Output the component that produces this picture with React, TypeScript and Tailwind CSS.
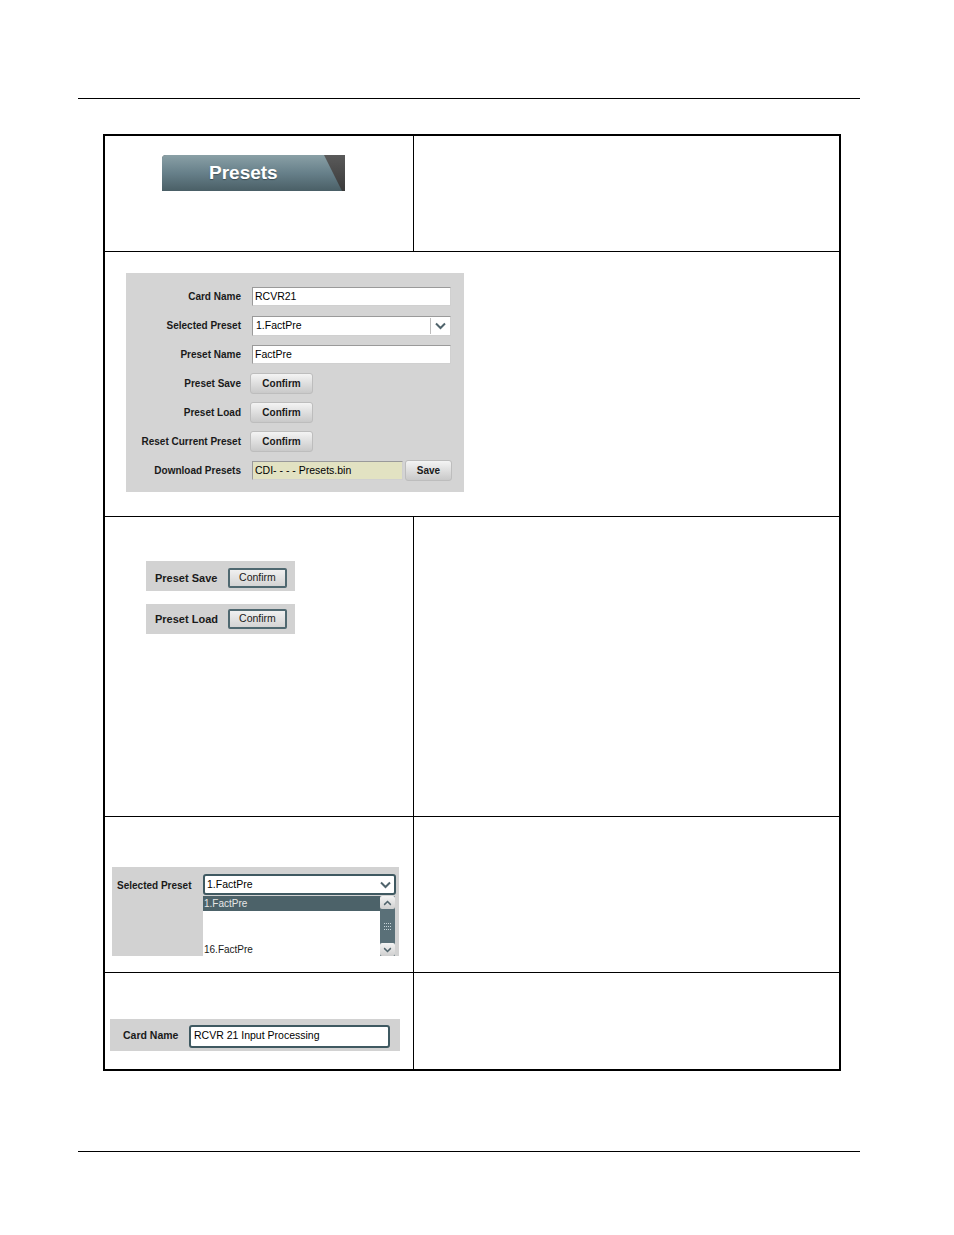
import React from "react";

const font = "font-['Liberation_Sans',Arial,sans-serif]";

function Chevron({ className = "" }: { className?: string }) {
  return (
    <svg width="11" height="8" viewBox="0 0 11 8" className={className}>
      <polyline points="1,1.5 5.5,6 10,1.5" fill="none" stroke="#50646c" strokeWidth="2" />
    </svg>
  );
}

function ConfirmButton({ label = "Confirm", w = "w-[63px]" }: { label?: string; w?: string }) {
  return (
    <div
      className={`${w} flex h-[21px] items-center justify-center rounded-[3px] border border-[#bdbdbd] bg-gradient-to-b from-[#f4f4f4] to-[#c9c9c9] text-[10px] font-bold text-[#1a1a1a]`}
    >
      {label}
    </div>
  );
}

function TextBox({ value, w = "w-[199px]", bg = "bg-white" }: { value: string; w?: string; bg?: string }) {
  return (
    <div
      className={`${w} ${bg} flex h-[19px] items-center border border-[#9a9a9a] border-b-[#d0d0d0] border-r-[#d0d0d0] pl-[2px] text-[10.5px] text-black`}
    >
      {value}
    </div>
  );
}

function FormRow({ label, children }: { label: string; children: React.ReactNode }) {
  return (
    <div className="flex h-[29px] items-center">
      <div className="w-[115px] text-right text-[10px] font-bold text-[#1a1a1a]">{label}</div>
      <div className="ml-[11px]">{children}</div>
    </div>
  );
}

function PresetsTab() {
  return (
    <div className="relative h-[36px] w-[183px] overflow-hidden rounded-tl-[4px] bg-gradient-to-b from-[#5a5a5a] to-[#3a3a3a]">
      <div className="absolute inset-0 bg-gradient-to-b from-[#8aa0a6] via-[#67808a] to-[#4a5f66] [clip-path:polygon(0_0,162px_0,180px_36px,0_36px)]" />
      <div className="absolute inset-0 flex items-center pl-[47px] text-[19px] font-bold text-white [text-shadow:0_1px_1px_rgba(0,0,0,0.35)]">
        Presets
      </div>
    </div>
  );
}

export default function App() {
  return (
    <div className={`${font} relative h-[1235px] w-[954px] bg-white`}>
      <div className="pt-[98px]">
        <div className="ml-[78px] h-px w-[782px] bg-black" />
      </div>

      <div className="ml-[103px] mt-[35px] w-[738px] border-2 border-black">
        {/* row 1 */}
        <div className="flex h-[116px] border-b border-black">
          <div className="w-[309px] border-r border-black pl-[57px] pt-[19px]">
            <PresetsTab />
          </div>
          <div className="flex-1" />
        </div>

        {/* row 2 */}
        <div className="h-[265px] border-b border-black pl-[21px] pt-[21px]">
          <div className="w-[338px] bg-[#d4d4d4] pb-[7px] pt-[9px]">
            <FormRow label="Card Name">
              <TextBox value="RCVR21" />
            </FormRow>
            <FormRow label="Selected Preset">
              <div className="flex h-[20px] w-[199px] items-center border border-[#9a9a9a] border-b-[#d0d0d0] border-r-[#d0d0d0] bg-white text-[10.5px]">
                <div className="flex-1 pl-[3px]">1.FactPre</div>
                <div className="flex h-[16px] w-[20px] items-center justify-center border-l border-[#bdbdbd]">
                  <Chevron />
                </div>
              </div>
            </FormRow>
            <FormRow label="Preset Name">
              <TextBox value="FactPre" />
            </FormRow>
            <FormRow label="Preset Save">
              <div className="-ml-[2px]">
                <ConfirmButton />
              </div>
            </FormRow>
            <FormRow label="Preset Load">
              <div className="-ml-[2px]">
                <ConfirmButton />
              </div>
            </FormRow>
            <FormRow label="Reset Current Preset">
              <div className="-ml-[2px]">
                <ConfirmButton />
              </div>
            </FormRow>
            <FormRow label="Download Presets">
              <div className="flex items-center gap-[2px]">
                <TextBox value="CDI- - - -  Presets.bin" w="w-[151px]" bg="bg-[#e2e2c2]" />
                <ConfirmButton label="Save" w="w-[47px]" />
              </div>
            </FormRow>
          </div>
        </div>

        {/* row 3 */}
        <div className="flex h-[300px] border-b border-black">
          <div className="w-[309px] border-r border-black pl-[41px] pt-[44px]">
            {["Preset Save", "Preset Load"].map((l, i) => (
              <div
                key={l}
                className={`flex h-[30px] w-[149px] items-center bg-[#d2d2d2] pl-[9px] ${i ? "mt-[13px]" : "pt-[4px]"}`}
              >
                <div className="w-[73px] text-[11px] font-bold text-[#1a1a1a]">{l}</div>
                <div className="flex h-[20px] w-[59px] items-center justify-center rounded-[2px] border-2 border-[#4f6870] bg-gradient-to-b from-[#f0f0f0] to-[#d4d4d4] text-[10.5px] text-[#1a1a1a]">
                  Confirm
                </div>
              </div>
            ))}
          </div>
          <div className="flex-1" />
        </div>

        {/* row 4 */}
        <div className="flex h-[156px] border-b border-black">
          <div className="w-[309px] border-r border-black pl-[7px] pt-[50px]">
            <div className="flex h-[89px] w-[287px] bg-[#d2d2d2] pl-[5px] pt-[7px]">
              <div className="w-[86px] pt-[4px] text-[10px] font-bold text-[#1a1a1a]">Selected Preset</div>
              <div className="flex flex-col">
                <div className="flex h-[21px] w-[193px] items-center rounded-[3px] border-2 border-[#3f5961] bg-white text-[10.5px]">
                  <div className="flex-1 pl-[2px]">1.FactPre</div>
                  <div className="flex w-[18px] items-center justify-center">
                    <Chevron />
                  </div>
                </div>
                <div className="mt-[1px] flex h-[60px] w-[192px] bg-white">
                  <div className="flex flex-1 flex-col text-[10px]">
                    <div className="flex h-[15px] items-center bg-[#4c6269] pl-[1px] text-[#e6e6e6]">1.FactPre</div>
                    <div className="flex-1" />
                    <div className="flex h-[13px] items-center pl-[1px] text-[#1a1a1a]">16.FactPre</div>
                  </div>
                  <div className="flex w-[15px] flex-col bg-[#5a7078]">
                    <div className="flex h-[13px] items-center justify-center rounded-[2px] bg-gradient-to-b from-[#f4f4f4] to-[#cfcfcf]">
                      <Chevron className="rotate-180 scale-75" />
                    </div>
                    <div className="flex flex-1 flex-col items-center justify-center gap-[2px]">
                      <div className="h-[1px] w-[7px] border-t border-dotted border-[#c8d4d8]" />
                      <div className="h-[1px] w-[7px] border-t border-dotted border-[#c8d4d8]" />
                      <div className="h-[1px] w-[7px] border-t border-dotted border-[#c8d4d8]" />
                    </div>
                    <div className="flex h-[13px] items-center justify-center rounded-[2px] bg-gradient-to-b from-[#f4f4f4] to-[#cfcfcf]">
                      <Chevron className="scale-75" />
                    </div>
                  </div>
                </div>
              </div>
            </div>
          </div>
          <div className="flex-1" />
        </div>

        {/* row 5 */}
        <div className="flex h-[96px]">
          <div className="w-[309px] border-r border-black pl-[5px] pt-[46px]">
            <div className="flex h-[32px] w-[290px] items-center bg-[#d2d2d2] pl-[13px] pt-[2px]">
              <div className="w-[66px] text-[10.5px] font-bold text-[#1a1a1a]">Card Name</div>
              <div className="flex h-[23px] w-[201px] items-center rounded-[3px] border-2 border-[#3f5961] bg-white pl-[3px] text-[10.5px]">
                RCVR 21 Input Processing
              </div>
            </div>
          </div>
          <div className="flex-1" />
        </div>
      </div>

      <div className="pt-[80px]">
        <div className="ml-[78px] h-px w-[782px] bg-black" />
      </div>
    </div>
  );
}
